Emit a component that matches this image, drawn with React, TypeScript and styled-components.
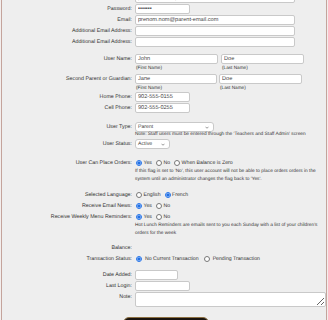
import React from 'react'
import styled, { createGlobalStyle } from 'styled-components'

const GlobalStyle = createGlobalStyle`
  html, body {
    margin: 0;
    padding: 0;
    background: #f3eeed;
  }
  body {
    font-family: 'Liberation Sans', Arial, Helvetica, sans-serif;
    color: #333;
    overflow: hidden;
    text-rendering: geometricPrecision;
  }
  input, textarea, button {
    text-rendering: geometricPrecision;
  }
`

const Panel = styled.div`
  margin: -7px 1px 0 1px;
  background: #eeeeee;
  border-left: 1px solid #c4a49c;
  border-right: 1px solid #c4a49c;
  padding-bottom: 30px;
`

const Row = styled.div<{ $after?: number }>`
  display: grid;
  grid-template-columns: 130px 1fr;
  column-gap: 3px;
  align-items: start;
  margin-bottom: ${({ $after }) => $after ?? 1}px;
`

const Spacer = styled.div<{ $h: number }>`
  height: ${({ $h }) => $h}px;
`

const Label = styled.label`
  text-align: right;
  font-size: 5.3px;
  line-height: 10px;
  white-space: nowrap;
`

const TextInput = styled.input<{ $w: number }>`
  display: block;
  box-sizing: border-box;
  width: ${({ $w }) => $w}px;
  height: 10px;
  margin: 0;
  padding: 0 2px;
  border: 1px solid #c9c9c9;
  border-radius: 2px;
  background: #fff;
  font-family: inherit;
  font-size: 5.6px;
  color: #444;
  outline: none;
`

const NameFields = styled.div<{ $gap: number }>`
  display: flex;
  gap: ${({ $gap }) => $gap}px;
`

const NameCol = styled.div`
  display: flex;
  flex-direction: column;
`

const Caption = styled.span`
  font-size: 4.7px;
  line-height: 7px;
  padding-left: 1px;
`

const SelectBox = styled.div<{ $w: number }>`
  display: flex;
  align-items: center;
  justify-content: space-between;
  box-sizing: border-box;
  width: ${({ $w }) => $w}px;
  height: 10px;
  padding: 0 4px 0 2px;
  border: 1px solid #c9c9c9;
  border-radius: 3px;
  background: #fff;
  font-size: 5.2px;
  color: #444;
`

const Chevron = styled.svg`
  width: 4px;
  height: 3px;
  flex-shrink: 0;
`

const Note = styled.div<{ $w?: number }>`
  font-size: 4.8px;
  line-height: 8px;
  max-width: ${({ $w }) => ($w ? `${$w}px` : 'none')};
`

const SmallNote = styled(Note)`
  line-height: 6px;
  white-space: nowrap;
`

const Radios = styled.div<{ $space?: number }>`
  display: flex;
  align-items: center;
  height: 10px;
  gap: ${({ $space }) => $space ?? 3}px;
`

const Option = styled.label`
  display: inline-flex;
  align-items: center;
  font-size: 5.2px;
  white-space: nowrap;
`

const Radio = styled.input.attrs({ type: 'radio' })<{ $pad?: number }>`
  width: 6px;
  height: 6px;
  margin: 0 ${({ $pad }) => $pad ?? 1.5}px 0 1px;
  accent-color: #1f6fe5;
`

const Value = styled.span`
  font-size: 5.3px;
  line-height: 10px;
`

const NoteArea = styled.textarea`
  box-sizing: border-box;
  display: block;
  width: 191px;
  height: 15px;
  margin: 0;
  padding: 1px 2px;
  border: 1px solid #c9c9c9;
  border-radius: 2px;
  background: #fff;
  font-family: inherit;
  font-size: 5.2px;
  outline: none;
`

const Actions = styled.div`
  display: flex;
  justify-content: center;
  padding-left: 4px;
  margin-top: 10px;
`

const SaveButton = styled.button`
  width: 86px;
  height: 18px;
  border: 1px solid #8c7042;
  border-radius: 6px;
  background: #1a140e;
  color: #fff;
  font-family: inherit;
  font-size: 6px;
  font-weight: bold;
`

function Dropdown({ value, width }: { value: string; width: number }) {
  return (
    <SelectBox $w={width} role="combobox">
      <span>{value}</span>
      <Chevron viewBox="0 0 8 5">
        <path d="M1 1 L4 4 L7 1" fill="none" stroke="#555" strokeWidth="1.2" />
      </Chevron>
    </SelectBox>
  )
}

export default function App() {
  return (
    <>
      <GlobalStyle />
      <Panel>
        <Row>
          <Label>Login:</Label>
          <TextInput $w={160} defaultValue="prenom.nom@parent-email.com" />
        </Row>
        <Row>
          <Label>Password:</Label>
          <TextInput $w={55} type="password" defaultValue="secret1" />
        </Row>
        <Row>
          <Label>Email:</Label>
          <TextInput $w={160} defaultValue="prenom.nom@parent-email.com" />
        </Row>
        <Row>
          <Label>Additional Email Address:</Label>
          <TextInput $w={160} />
        </Row>
        <Row>
          <Label>Additional Email Address:</Label>
          <TextInput $w={160} />
        </Row>
        <Spacer $h={6} />
        <Row $after={3}>
          <Label>User Name:</Label>
          <NameFields $gap={3}>
            <NameCol>
              <TextInput $w={83} defaultValue="John" />
              <Caption>(First Name)</Caption>
            </NameCol>
            <NameCol>
              <TextInput $w={83} defaultValue="Doe" />
              <Caption>(Last Name)</Caption>
            </NameCol>
          </NameFields>
        </Row>
        <Row>
          <Label>Second Parent or Guardian:</Label>
          <NameFields $gap={2}>
            <NameCol>
              <TextInput $w={82} defaultValue="Jane" />
              <Caption>(First Name)</Caption>
            </NameCol>
            <NameCol>
              <TextInput $w={83} defaultValue="Doe" />
              <Caption>(Last Name)</Caption>
            </NameCol>
          </NameFields>
        </Row>
        <Row>
          <Label>Home Phone:</Label>
          <TextInput $w={55} defaultValue="902-555-0155" />
        </Row>
        <Row>
          <Label>Cell Phone:</Label>
          <TextInput $w={55} defaultValue="902-555-0255" />
        </Row>
        <Spacer $h={8} />
        <Row>
          <Label>User Type:</Label>
          <div>
            <Dropdown value="Parent" width={79} />
            <SmallNote>Note: Staff users must be entered through the 'Teachers and Staff Admin' screen</SmallNote>
          </div>
        </Row>
        <Row>
          <Label>User Status:</Label>
          <Dropdown value="Active" width={35} />
        </Row>
        <Spacer $h={8} />
        <Row>
          <Label>User Can Place Orders:</Label>
          <div>
            <Radios>
              <Option>
                <Radio name="orders" defaultChecked />
                Yes
              </Option>
              <Option>
                <Radio name="orders" />
                No
              </Option>
              <Option>
                <Radio name="orders" />
                When Balance is Zero
              </Option>
            </Radios>
            <Note $w={186}>
              If this flag is set to 'No', this user account will not be able to place orders orders in the system
              until an administrator changes the flag back to 'Yes'.
            </Note>
          </div>
        </Row>
        <Spacer $h={5} />
        <Row>
          <Label>Selected Language:</Label>
          <Radios>
            <Option>
              <Radio name="lang" />
              English
            </Option>
            <Option>
              <Radio name="lang" defaultChecked />
              French
            </Option>
          </Radios>
        </Row>
        <Row>
          <Label>Receive Email News:</Label>
          <Radios>
            <Option>
              <Radio name="news" defaultChecked />
              Yes
            </Option>
            <Option>
              <Radio name="news" />
              No
            </Option>
          </Radios>
        </Row>
        <Row>
          <Label>Receive Weekly Menu Reminders:</Label>
          <div>
            <Radios>
              <Option>
                <Radio name="weekly" defaultChecked />
                Yes
              </Option>
              <Option>
                <Radio name="weekly" />
                No
              </Option>
            </Radios>
            <Note $w={186}>
              Hot Lunch Reminders are emails sent to you each Sunday with a list of your children's orders for the
              week
            </Note>
          </div>
        </Row>
        <Spacer $h={4} />
        <Row>
          <Label>Balance:</Label>
          <Value />
        </Row>
        <Row>
          <Label>Transaction Status:</Label>
          <Radios $space={4}>
            <Option>
              <Radio name="trans" $pad={3} defaultChecked />
              No Current Transaction
            </Option>
            <Option>
              <Radio name="trans" $pad={3} />
              Pending Transaction
            </Option>
          </Radios>
        </Row>
        <Spacer $h={5} />
        <Row>
          <Label>Date Added:</Label>
          <TextInput $w={43} />
        </Row>
        <Row>
          <Label>Last Login:</Label>
          <TextInput $w={55} />
        </Row>
        <Row>
          <Label>Note:</Label>
          <NoteArea />
        </Row>
        <Actions>
          <SaveButton>Save</SaveButton>
        </Actions>
      </Panel>
    </>
  )
}
